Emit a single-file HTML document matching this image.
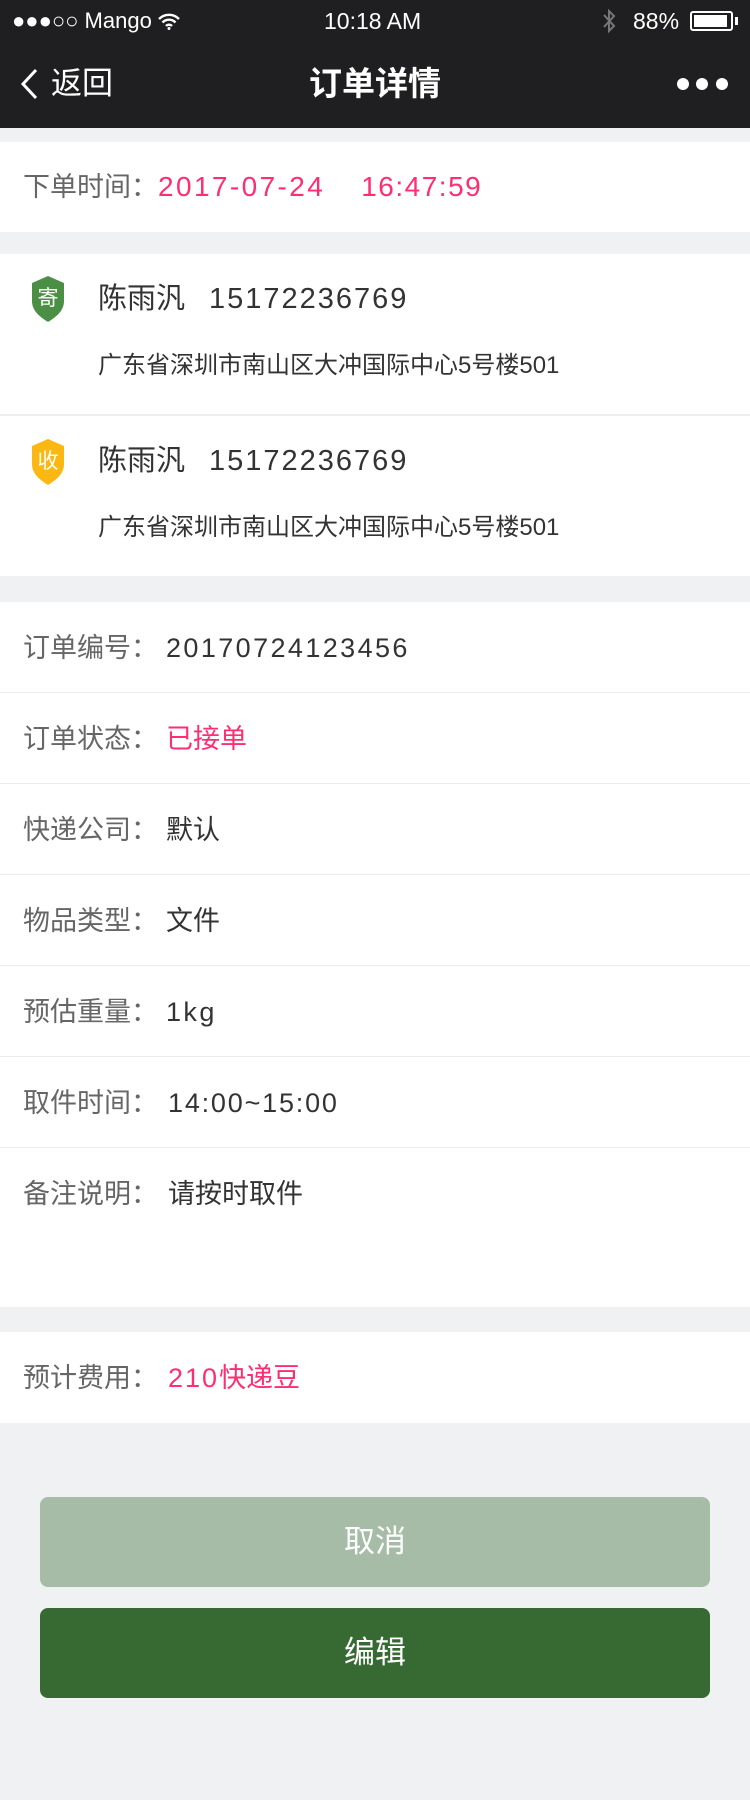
<!DOCTYPE html>
<html><head><meta charset="utf-8"><style>
*{margin:0;padding:0;box-sizing:border-box}
body{width:750px;height:1800px;background:#f0f1f3;font-family:"Liberation Sans","Noto Sans CJK SC",sans-serif;position:relative;overflow:hidden}
.abs{position:absolute}
.top{left:0;top:0;width:750px;height:128px;background:#1f1f21;color:#fff}
.white{position:absolute;left:0;width:750px;background:#fff}
.lbl{position:absolute;left:23px;font-size:27px;color:#666;line-height:30px;white-space:nowrap}
.val{color:#333}
.num{letter-spacing:2.4px}
.pink{color:#ff2d72}
.sep{position:absolute;left:0;width:750px;height:1px;background:#ececec}
.name{position:absolute;left:98px;font-size:29px;color:#333;line-height:34px;white-space:nowrap}
.addr{position:absolute;left:98px;font-size:24px;color:#333;line-height:28px;white-space:nowrap}
.btn{position:absolute;left:40px;width:670px;height:90px;border-radius:8px;color:#fff;font-size:31px;text-align:center;line-height:90px}
</style></head><body>
<div class="abs top">
 <div class="abs" style="left:12px;top:8px;font-size:22px;line-height:26px">●●●○○ Mango
  <svg width="22" height="18" viewBox="0 0 22 18" style="vertical-align:-2px"><path d="M1 7a14 14 0 0 1 20 0M4.5 10.5a9 9 0 0 1 13 0M8 14a4 4 0 0 1 6 0" stroke="#fff" stroke-width="2.4" fill="none"/><circle cx="11" cy="16.5" r="1.5" fill="#fff"/></svg></div>
 <div class="abs" style="left:324px;top:8px;font-size:23px;line-height:26px">10:18 AM</div>
 <svg class="abs" style="left:602px;top:8px" width="14" height="26" viewBox="0 0 14 26"><path d="M2 7l10 11-5 5V3l5 5L2 19" stroke="#777" stroke-width="2" fill="none"/></svg>
 <div class="abs" style="left:633px;top:8px;font-size:23px;line-height:26px">88%</div>
 <div class="abs" style="left:690px;top:11px;width:43px;height:20px;border:2px solid #fff;border-radius:3px;padding:2px"><div style="width:33px;height:12px;background:#fff"></div></div>
 <div class="abs" style="left:735px;top:17px;width:3px;height:8px;background:#fff"></div>
 <svg class="abs" style="left:20px;top:68px" width="20" height="32" viewBox="0 0 20 32"><path d="M16 2L3 16l13 14" stroke="#fff" stroke-width="3" fill="none"/></svg>
 <div class="abs" style="left:51px;top:66px;font-size:31px;line-height:36px">返回</div>
 <div class="abs" style="left:0;width:750px;text-align:center;top:65px;font-size:33px;font-weight:bold;line-height:38px">订单详情</div>
 <div class="abs" style="left:677px;top:78px;width:12px;height:12px;border-radius:6px;background:#fff"></div>
 <div class="abs" style="left:696px;top:78px;width:12px;height:12px;border-radius:6px;background:#fff"></div>
 <div class="abs" style="left:716px;top:78px;width:12px;height:12px;border-radius:6px;background:#fff"></div>
</div>

<div class="white" style="top:142px;height:90px"><div class="lbl" style="top:30px">下单时间：<span class="pink" style="font-size:28px;letter-spacing:2.4px">2017-07-24</span><span class="pink" style="font-size:28px;letter-spacing:1.5px;margin-left:36px">16:47:59</span></div></div>

<div class="white" style="top:254px;height:322px">
 <svg class="abs" style="left:27px;top:20px" width="42" height="50" viewBox="0 0 42 50"><path d="M21 2L37 9v18c0 10-8 16-16 21C13 43 5 37 5 27V9z" fill="#4a8f45"/><text x="21" y="31" font-size="21" fill="#fff" text-anchor="middle" font-family="Noto Sans CJK SC">寄</text></svg>
 <div class="name" style="top:28px">陈雨汎<span class="num" style="margin-left:24px;letter-spacing:2px">15172236769</span></div>
 <div class="addr" style="top:98px">广东省深圳市南山区大冲国际中心5号楼501</div>
 <div class="sep" style="top:160px;height:2px;background:#efefef"></div>
 <svg class="abs" style="left:27px;top:183px" width="42" height="50" viewBox="0 0 42 50"><path d="M21 2L37 9v18c0 10-8 16-16 21C13 43 5 37 5 27V9z" fill="#fbb812"/><text x="21" y="31" font-size="21" fill="#fff" text-anchor="middle" font-family="Noto Sans CJK SC">收</text></svg>
 <div class="name" style="top:190px">陈雨汎<span class="num" style="margin-left:24px;letter-spacing:2px">15172236769</span></div>
 <div class="addr" style="top:260px">广东省深圳市南山区大冲国际中心5号楼501</div>
</div>

<div class="white" style="top:602px;height:705px">
 <div class="lbl" style="top:31px">订单编号：<span class="val num" style="margin-left:8px">20170724123456</span></div>
 <div class="sep" style="top:90px"></div>
 <div class="lbl" style="top:122px">订单状态：<span class="pink" style="margin-left:8px">已接单</span></div>
 <div class="sep" style="top:181px"></div>
 <div class="lbl" style="top:213px">快递公司：<span class="val" style="margin-left:8px">默认</span></div>
 <div class="sep" style="top:272px"></div>
 <div class="lbl" style="top:304px">物品类型：<span class="val" style="margin-left:8px">文件</span></div>
 <div class="sep" style="top:363px"></div>
 <div class="lbl" style="top:395px">预估重量：<span class="val num" style="margin-left:8px">1kg</span></div>
 <div class="sep" style="top:454px"></div>
 <div class="lbl" style="top:486px">取件时间：<span class="val" style="margin-left:10px;letter-spacing:1.8px">14:00~15:00</span></div>
 <div class="sep" style="top:545px"></div>
 <div class="lbl" style="top:577px">备注说明：<span class="val" style="margin-left:10px">请按时取件</span></div>
</div>

<div class="white" style="top:1332px;height:91px"><div class="lbl" style="top:31px">预计费用：<span class="pink" style="margin-left:10px"><span style="letter-spacing:2px">210</span>快递豆</span></div></div>

<div class="btn" style="top:1497px;background:#a6bca6">取消</div>
<div class="btn" style="top:1608px;background:#376a32">编辑</div>
</body></html>
